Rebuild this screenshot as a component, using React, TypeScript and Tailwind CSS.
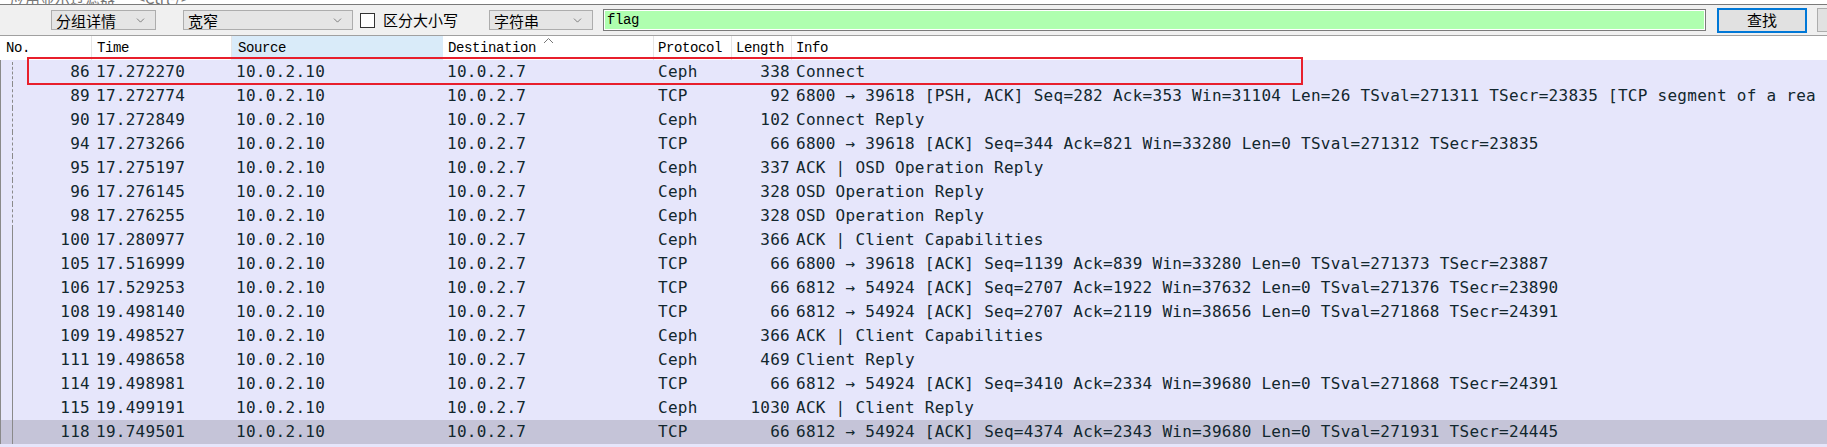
import { ChevronDown } from "lucide-react";

const rows = [
  ["86", "17.272270", "Ceph", "338", "Connect"],
  ["89", "17.272774", "TCP", "92", "6800 → 39618 [PSH, ACK] Seq=282 Ack=353 Win=31104 Len=26 TSval=271311 TSecr=23835 [TCP segment of a rea"],
  ["90", "17.272849", "Ceph", "102", "Connect Reply"],
  ["94", "17.273266", "TCP", "66", "6800 → 39618 [ACK] Seq=344 Ack=821 Win=33280 Len=0 TSval=271312 TSecr=23835"],
  ["95", "17.275197", "Ceph", "337", "ACK | OSD Operation Reply"],
  ["96", "17.276145", "Ceph", "328", "OSD Operation Reply"],
  ["98", "17.276255", "Ceph", "328", "OSD Operation Reply"],
  ["100", "17.280977", "Ceph", "366", "ACK | Client Capabilities"],
  ["105", "17.516999", "TCP", "66", "6800 → 39618 [ACK] Seq=1139 Ack=839 Win=33280 Len=0 TSval=271373 TSecr=23887"],
  ["106", "17.529253", "TCP", "66", "6812 → 54924 [ACK] Seq=2707 Ack=1922 Win=37632 Len=0 TSval=271376 TSecr=23890"],
  ["108", "19.498140", "TCP", "66", "6812 → 54924 [ACK] Seq=2707 Ack=2119 Win=38656 Len=0 TSval=271868 TSecr=24391"],
  ["109", "19.498527", "Ceph", "366", "ACK | Client Capabilities"],
  ["111", "19.498658", "Ceph", "469", "Client Reply"],
  ["114", "19.498981", "TCP", "66", "6812 → 54924 [ACK] Seq=3410 Ack=2334 Win=39680 Len=0 TSval=271868 TSecr=24391"],
  ["115", "19.499191", "Ceph", "1030", "ACK | Client Reply"],
  ["118", "19.749501", "TCP", "66", "6812 → 54924 [ACK] Seq=4374 Ack=2343 Win=39680 Len=0 TSval=271931 TSecr=24445"],
];

function Combo({ label, width }: { label: string; width: string }) {
  return (
    <div
      className={`${width} shrink-0 h-[20px] flex items-center justify-between bg-[#e5e5e5] border border-[#adadad] pl-[4px] pr-[8px] text-[15px] text-black`}
    >
      <span className="leading-none whitespace-nowrap">{label}</span>
      <ChevronDown size={13} strokeWidth={1.3} className="text-[#555]" />
    </div>
  );
}

export default function App() {
  const cjk = "font-['Noto_Sans_CJK_SC',sans-serif]";
  const head = "font-['Liberation_Mono',monospace] text-[14px] tracking-[-0.4px] text-black";
  const mono = "font-['DejaVu_Sans_Mono',monospace] text-[16px] tracking-[0.27px] text-[#12272e]";

  return (
    <div className="w-[1827px] h-[447px] overflow-hidden bg-white relative">
      {/* cut-off filter bar */}
      <div className="h-[5px] overflow-hidden border-b border-[#7a7a7a] bg-white relative">
        <div className={`${cjk} absolute left-[10px] top-[-13px] text-[15px] text-[#777] whitespace-nowrap`}>
          应用显示过滤器 … &lt;Ctrl-/&gt;
        </div>
      </div>

      {/* search toolbar */}
      <div className={`${cjk} h-[31px] bg-[#f0f0f0] border-b border-[#a0a0a0] flex items-center pl-[51px]`}>
        <Combo label="分组详情" width="w-[105px]" />
        <div className="ml-[27px] shrink-0">
          <Combo label="宽窄" width="w-[170px]" />
        </div>
        <div className="ml-[7px] shrink-0 w-[15px] h-[15px] border border-[#333] bg-white" />
        <span className="ml-[8px] w-[76px] shrink-0 whitespace-nowrap text-[15px] text-black">区分大小写</span>
        <div className="ml-[30px] shrink-0">
          <Combo label="字符串" width="w-[104px]" />
        </div>
        <div className="ml-[10px] shrink-0 w-[1103px] h-[22px] border border-[#7a7a7a] bg-[#afffaf] flex items-center">
          <div className="w-full h-full border border-white flex items-center pl-[2px]">
            <span className="font-['Liberation_Mono',monospace] text-[14px] tracking-[-0.4px] text-black">flag</span>
          </div>
        </div>
        <div className="ml-[11px] shrink-0 w-[90px] h-[25px] border-2 border-[#0078d7] bg-[#e1e1e1] flex items-center justify-center text-[15px] text-black">
          查找
        </div>
        <div className="ml-[10px] shrink-0 w-[40px] h-[24px] border border-[#adadad] bg-[#e1e1e1]" />
      </div>

      {/* column header */}
      <div className={`${head} h-[24px] flex relative`}>
        <div className="w-[92px] pl-[6px] leading-[24px] border-r border-[#e5e5e5]">No.</div>
        <div className="w-[140px] pl-[5px] leading-[24px] border-r border-[#e5e5e5]">Time</div>
        <div className="w-[211px] pl-[6px] leading-[24px] bg-[#d9ebf9]">Source</div>
        <div className="w-[211px] pl-[5px] leading-[24px] border-r border-[#e5e5e5]">Destination</div>
        <div className="w-[78px] pl-[4px] leading-[24px] border-r border-[#e5e5e5]">Protocol</div>
        <div className="w-[60px] pl-[4px] leading-[24px] border-r border-[#e5e5e5]">Length</div>
        <div className="flex-1 pl-[4px] leading-[24px]">Info</div>
        <svg className="absolute left-[543px] top-[1px]" width="11" height="7" viewBox="0 0 11 7">
          <path d="M1 6 L5.5 1.5 L10 6" fill="none" stroke="#777" strokeWidth="1" />
        </svg>
      </div>

      {/* packet rows */}
      <div className="relative bg-[#e6e6fb]">
        {rows.map((r, i) => (
          <div
            key={r[0]}
            className={`${mono} h-[24px] leading-[24px] flex whitespace-nowrap ${i === rows.length - 1 ? "bg-[#c5c4d8]" : "bg-[#e6e6fb]"}`}
          >
            <div className="w-[92px] pr-[2px] text-right relative">
              <span className="absolute left-0 top-0 bottom-0 border-l border-[#8a8a8a]" />
              <span
                className={`absolute left-[12px] top-0 bottom-0 border-l border-[#8a8a8a] ${i < 7 ? "border-dashed" : ""} ${i === 0 ? "top-[2px]" : ""}`}
              />
              {r[0]}
            </div>
            <div className="w-[140px] pl-[4px]">{r[1]}</div>
            <div className="w-[211px] pl-[4px]">10.0.2.10</div>
            <div className="w-[211px] pl-[4px]">10.0.2.7</div>
            <div className="w-[78px] pl-[4px]">{r[2]}</div>
            <div className="w-[60px] pr-[2px] text-right">{r[3]}</div>
            <div className="flex-1 min-w-0 pl-[4px]">{r[4]}</div>
          </div>
        ))}
        <div className="h-[4px] bg-[#e6e6fb]" />
      </div>

      {/* highlight box */}
      <div className="absolute left-[27px] top-[57px] w-[1276px] h-[28px] border-2 border-[#e81f2c] pointer-events-none" />
    </div>
  );
}
